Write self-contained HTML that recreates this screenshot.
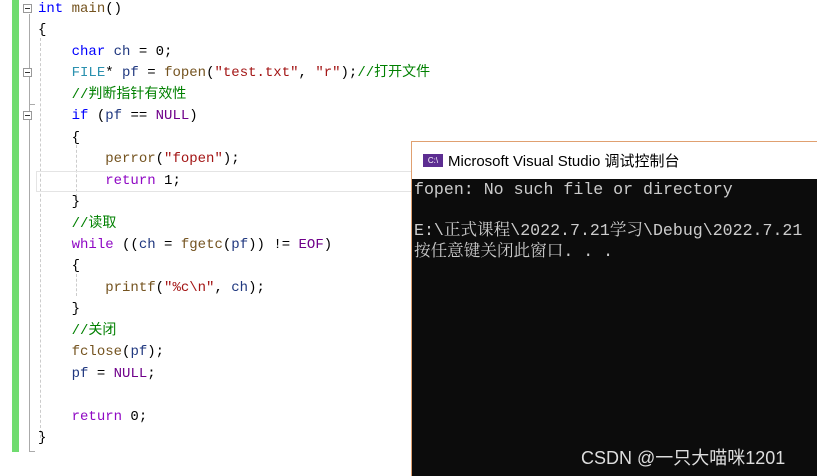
<html><head><style>
body{margin:0;width:817px;height:475px;background:#fff;position:relative;overflow:hidden;font-family:"Liberation Mono","Noto Sans CJK SC",monospace}
.code{position:absolute;left:38px;top:-1px;font-size:14px;line-height:21.45px;white-space:pre;color:#000}
.k{color:#0000ff}.t{color:#2b91af}.n{color:#6f008a}.s{color:#a31515}.c{color:#008000}.r{color:#8f08c4}.f{color:#74531f}.v{color:#1f377f}
.fold{position:absolute;left:23px;width:9px;height:9px;border:1px solid #999;background:#fff;box-sizing:border-box}
.fold:after{content:"";position:absolute;left:1px;top:3px;width:5px;height:1px;background:#333}
</style></head><body>
<div style="position:absolute;left:12px;top:0;width:7px;height:452px;background:#6fdc6f"></div>
<div style="position:absolute;left:29px;top:14px;width:1px;height:438px;background:#aaa"></div>
<div style="position:absolute;left:29px;top:451px;width:6px;height:1px;background:#aaa"></div>
<div style="position:absolute;left:40px;top:38px;height:400px;border-left:1px dashed #ccc"></div>
<div style="position:absolute;left:76px;top:145px;height:52px;border-left:1px dashed #ccc"></div>
<div style="position:absolute;left:76px;top:274px;height:22px;border-left:1px dashed #ccc"></div>
<div class="fold" style="top:4px"></div>
<div class="fold" style="top:68px"></div>
<div class="fold" style="top:111px"></div>
<div style="position:absolute;left:29px;top:104px;width:6px;height:1px;background:#aaa"></div>
<div style="position:absolute;left:36px;top:171px;width:380px;height:19px;border:1px solid #e4e4e4"></div>
<div class="code"><span class="k">int</span> <span class="f">main</span>()
{
    <span class="k">char</span> <span class="v">ch</span> = 0;
    <span class="t">FILE</span>* <span class="v">pf</span> = <span class="f">fopen</span>(<span class="s">"test.txt"</span>, <span class="s">"r"</span>);<span class="c">//打开文件</span>
    <span class="c">//判断指针有效性</span>
    <span class="k">if</span> (<span class="v">pf</span> == <span class="n">NULL</span>)
    {
        <span class="f">perror</span>(<span class="s">"fopen"</span>);
        <span class="r">return</span> 1;
    }
    <span class="c">//读取</span>
    <span class="r">while</span> ((<span class="v">ch</span> = <span class="f">fgetc</span>(<span class="v">pf</span>)) != <span class="n">EOF</span>)
    {
        <span class="f">printf</span>(<span class="s">"%c\n"</span>, <span class="v">ch</span>);
    }
    <span class="c">//关闭</span>
    <span class="f">fclose</span>(<span class="v">pf</span>);
    <span class="v">pf</span> = <span class="n">NULL</span>;

    <span class="r">return</span> 0;
}</div>
<div style="position:absolute;left:411px;top:141px;width:406px;height:334px;border-left:1px solid #e0a070;border-top:1px solid #e0a070;background:#fff">
<div style="position:absolute;left:11px;top:12px;width:20px;height:13px;background:#5c2d91;color:#fff;font:8px 'Liberation Sans';line-height:13px;text-align:center">C:\</div>
<div style="position:absolute;left:36px;top:8px;font:15px 'Liberation Sans','Noto Sans CJK SC',sans-serif;color:#000">Microsoft Visual Studio 调试控制台</div>
<div style="position:absolute;left:0;top:37px;width:406px;height:297px;background:#0c0c0c"></div>
<div style="position:absolute;left:2px;top:38px;font-size:16.6px;line-height:20.5px;color:#ccc;white-space:pre;font-family:'Liberation Mono','Noto Serif CJK SC',monospace">fopen: No such file or directory

E:\正式课程\2022.7.21学习\Debug\2022.7.21
按任意键关闭此窗口. . .</div>
<div style="position:absolute;left:169px;top:302px;font:18px 'Liberation Sans','Noto Sans CJK SC',sans-serif;color:#ddd">CSDN @一只大喵咪1201</div>
</div>
</body></html>
